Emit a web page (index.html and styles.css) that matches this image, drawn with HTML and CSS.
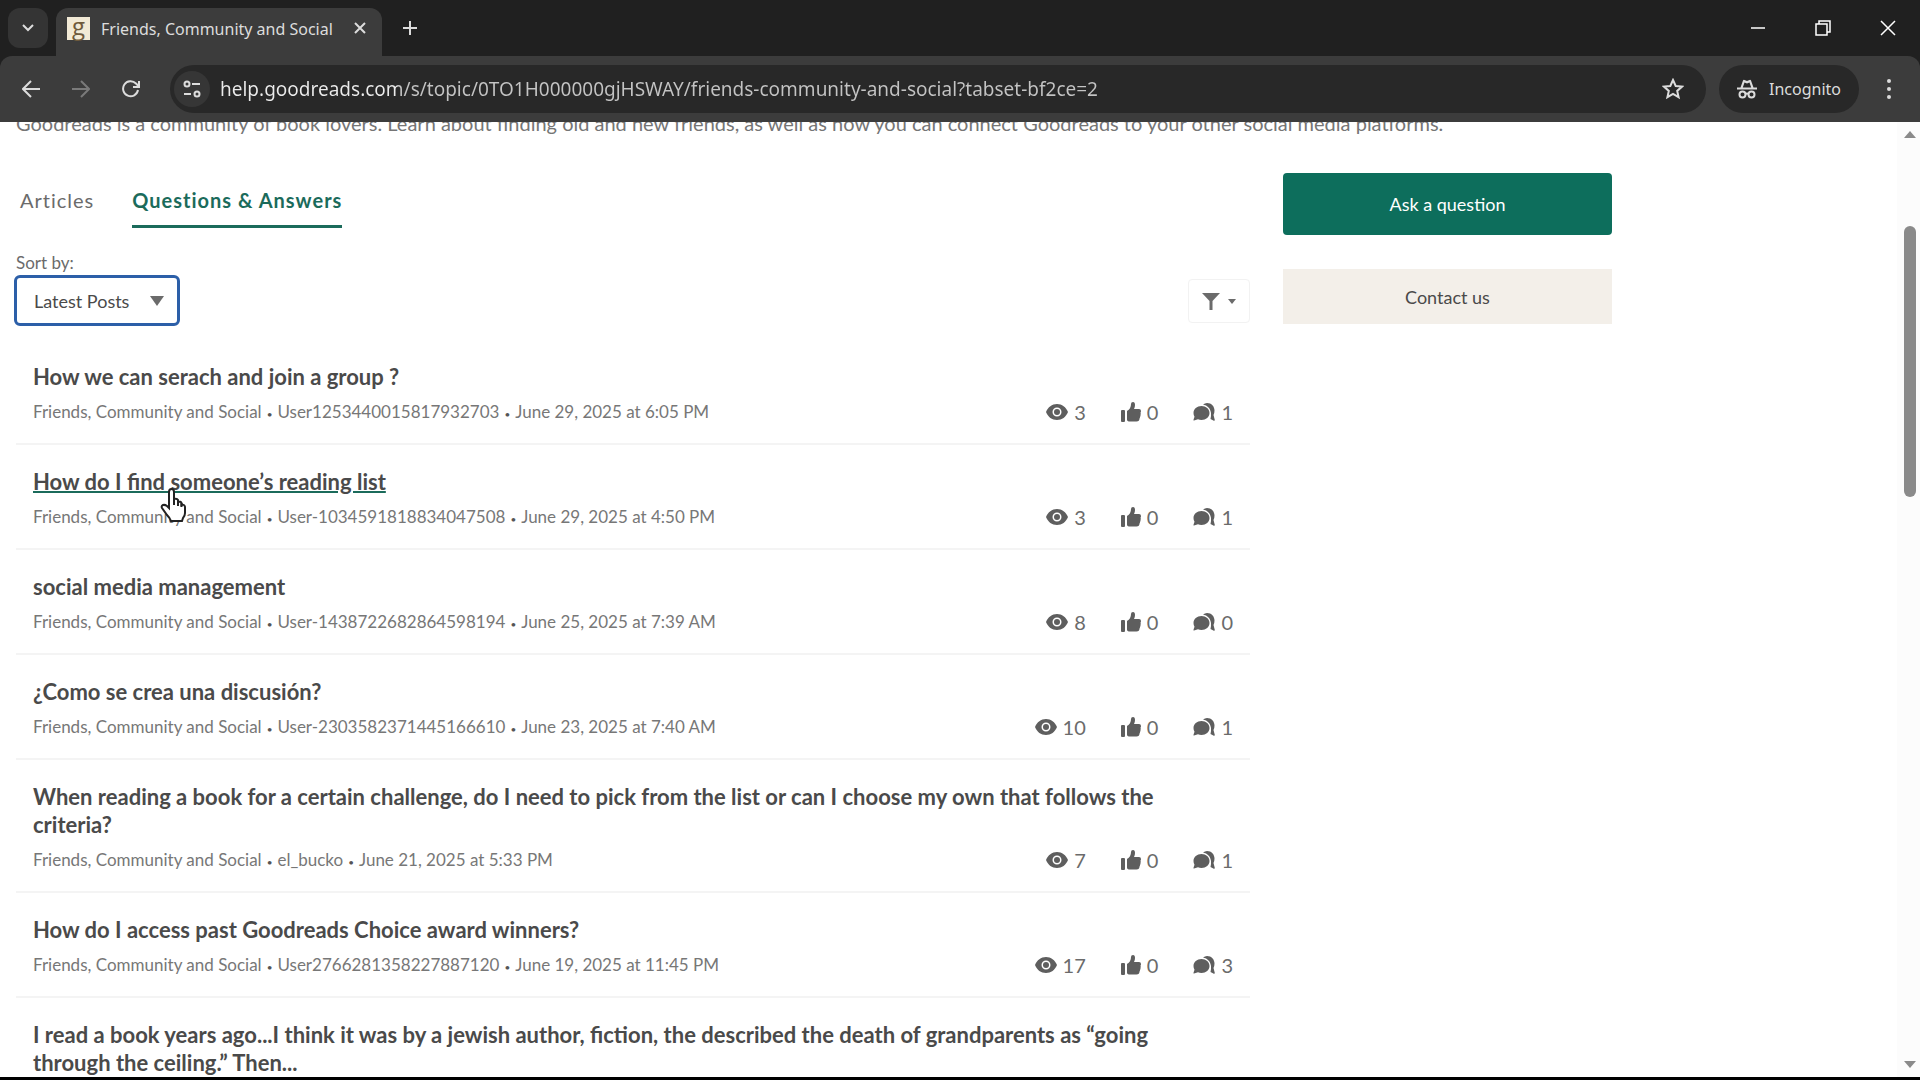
FILE: index.html
```html
<!DOCTYPE html>
<html lang="en">
<head>
<meta charset="utf-8">
<title>Friends, Community and Social</title>
<link rel="stylesheet" href="styles.css">
</head>
<body>
<svg class="sprite" aria-hidden="true">
  <symbol id="eye" viewBox="0 0 22 16"><path fill-rule="evenodd" d="M11 0C6 0 2 3 0 8c2 5 6 8 11 8s9-3 11-8C20 3 16 0 11 0Zm0 3.500a4.500 4.500 0 1 1 0 9 4.500 4.500 0 0 1 0-9Z"/><circle cx="11" cy="8" r="3"/></symbol>
  <symbol id="like" viewBox="0 0 20 20"><path d="M0 9q0-1 1-1h2q1 0 1 1v10q0 1-1 1H1q-1 0-1-1ZM6 9q4-2 4-7 0-2 2-2 2 0 2 3 0 2-1 4h5q2 0 2 2 0 1-.5 1.500.5 1 0 2.500.2 1-.5 2 0 1-.5 1.500 0 3-3 3H9q-3 0-3-2Z"/></symbol>
  <symbol id="talk" viewBox="0 0 22 18"><path d="M8.500 3c4.500 0 8 3 8 7s-3.500 7-8 7q-2 0-3.500-.7L1 17.500q-.8.2-.5-.7l1-3Q.5 12 .5 10c0-4 3.500-7 8-7Z"/><path d="M10 1.500Q12 0 14 0c4.500 0 7.500 3.500 7.500 7.500q0 2.500-1 4.500l1.300 5q0 1-1 .7L17.500 16q.8-3 .5-6C17.500 5.500 14.500 2.500 10 1.500Z"/></symbol>
</svg>

<header class="browser">
  <div class="tabstrip">
    <button class="tab-search" aria-label="Search tabs"><svg width="14" height="10" viewBox="0 0 14 10"><path d="m2 2 5 5 5-5"/></svg></button>
    <div class="tab">
      <span class="favicon">g</span>
      <span class="tab-title">Friends, Community and Social</span>
      <button class="plain" aria-label="Close tab"><svg width="12" height="12" viewBox="0 0 12 12"><path d="m1 1 10 10M11 1 1 11"/></svg></button>
    </div>
    <button class="plain new-tab" aria-label="New tab"><svg width="16" height="16" viewBox="0 0 16 16"><path d="M8 1v14M1 8h14"/></svg></button>
    <div class="window-controls">
      <button class="plain" aria-label="Minimize"><svg width="16" height="16" viewBox="0 0 16 16"><path d="M1 8h14"/></svg></button>
      <button class="plain" aria-label="Restore"><svg width="16" height="16" viewBox="0 0 16 16"><path d="M1 4h11v11H1ZM4 4V1h11v11h-3"/></svg></button>
      <button class="plain" aria-label="Close"><svg width="16" height="16" viewBox="0 0 16 16"><path d="m1 1 14 14M15 1 1 15"/></svg></button>
    </div>
  </div>
  <div class="toolbar">
    <nav class="history">
      <button class="plain" aria-label="Back"><svg width="18" height="18" viewBox="0 0 18 18"><path d="M18 9H2M9 1 1 9l8 8"/></svg></button>
      <button class="plain dim" aria-label="Forward"><svg width="18" height="18" viewBox="0 0 18 18"><path d="M0 9h16M9 1l8 8-8 8"/></svg></button>
      <button class="plain" aria-label="Reload"><svg width="18" height="18" viewBox="0 0 18 18"><path d="M16 10a7.500 7.500 0 1 1-2-6.500L16.500 6"/><path d="M17 1v6h-6"/></svg></button>
    </nav>
    <div class="omnibox">
      <button class="site-info" aria-label="Site information"><svg width="18" height="18" viewBox="0 0 18 18"><circle cx="4" cy="4" r="2.500"/><path d="M9 4h8M1 14h7"/><circle cx="14" cy="14" r="2.500"/></svg></button>
      <input class="url" type="text" aria-label="Address" value="help.goodreads.com/s/topic/0TO1H000000gjHSWAY/friends-community-and-social?tabset-bf2ce=2">
      <button class="plain" aria-label="Bookmark"><svg width="22" height="22" viewBox="0 0 22 22"><path d="m11 2 2.700 6 6.300.6-4.800 4.300 1.400 6.300L11 16l-5.600 3.200 1.400-6.300L2 8.600 8.300 8Z"/></svg></button>
    </div>
    <button class="incognito"><svg width="20" height="20" viewBox="0 0 20 20"><path class="solid" fill-rule="evenodd" d="M0 8.500h3.500L6 1.500Q6.500.5 7.500 1L10 2l2.500-1q1-.5 1.500.5l2.500 7H20v2H0ZM7.500 3.500l-1.700 5h8.400l-1.700-5L10 4.500Z"/><circle cx="5.500" cy="15.500" r="3"/><circle cx="14.500" cy="15.500" r="3"/><path d="M8.500 15q1.500-1 3 0"/></svg>Incognito</button>
    <button class="plain" aria-label="Menu"><svg width="6" height="22" viewBox="0 0 6 22"><g class="solid"><circle cx="3" cy="3" r="2"/><circle cx="3" cy="11" r="2"/><circle cx="3" cy="19" r="2"/></g></svg></button>
  </div>
</header>

<div class="viewport">
  <div class="page">
    <p class="intro">Goodreads is a community of book lovers. Learn about finding old and new friends, as well as how you can connect Goodreads to your other social media platforms.</p>
    <div class="columns">
      <main class="feed">
        <nav class="tabs">
          <a href="#articles">Articles</a>
          <a href="#questions" class="current">Questions &amp; Answers</a>
        </nav>
        <div class="controls">
          <div class="sort">
            <label for="sort">Sort by:</label>
            <div class="select-box">
              <select id="sort"><option>Latest Posts</option></select>
              <svg width="14" height="10" viewBox="0 0 14 10"><path d="M0 0h14L7 10Z"/></svg>
            </div>
          </div>
          <button class="filter" aria-label="Filter"><svg width="18" height="18" viewBox="0 0 18 18"><path d="M0 1h18l-7.500 8v9h-3V9Z"/></svg><svg width="8" height="5" viewBox="0 0 8 5"><path d="M0 0h8L4 5Z"/></svg></button>
        </div>
        <ul class="posts">
          <li class="post">
            <h2><a href="#q1">How we can serach and join a group ?</a></h2>
            <div class="details">
              <p class="meta"><a href="#t">Friends, Community and Social</a><span>•</span><a href="#u1">User1253440015817932703</a><span>•</span>June 29, 2025 at 6:05 PM</p>
              <div class="stats"><span><svg class="eye"><use href="#eye"/></svg>3</span><span><svg class="like"><use href="#like"/></svg>0</span><span><svg class="talk"><use href="#talk"/></svg>1</span></div>
            </div>
          </li>
          <li class="post">
            <h2><a href="#q2" class="hovered">How do I find someone’s reading list<svg class="pointer" viewBox="0 0 26 34"><path d="M9 20V4q0-3 2.500-3T14 4v10-3q3-1 4 1v2q3-1 3.500 1v2q3-1 3.500 2v6q0 3-2 5l-1 3H11q-1-3-4-6l-5-7q-1-2 1-3 2-.5 4 1l2 2Z"/><path d="M14 11v6M18 12v6M21.500 15v4"/></svg></a></h2>
            <div class="details">
              <p class="meta"><a href="#t">Friends, Community and Social</a><span>•</span><a href="#u2">User-1034591818834047508</a><span>•</span>June 29, 2025 at 4:50 PM</p>
              <div class="stats"><span><svg class="eye"><use href="#eye"/></svg>3</span><span><svg class="like"><use href="#like"/></svg>0</span><span><svg class="talk"><use href="#talk"/></svg>1</span></div>
            </div>
          </li>
          <li class="post">
            <h2><a href="#q3">social media management</a></h2>
            <div class="details">
              <p class="meta"><a href="#t">Friends, Community and Social</a><span>•</span><a href="#u3">User-1438722682864598194</a><span>•</span>June 25, 2025 at 7:39 AM</p>
              <div class="stats"><span><svg class="eye"><use href="#eye"/></svg>8</span><span><svg class="like"><use href="#like"/></svg>0</span><span><svg class="talk"><use href="#talk"/></svg>0</span></div>
            </div>
          </li>
          <li class="post">
            <h2><a href="#q4">¿Como se crea una discusión?</a></h2>
            <div class="details">
              <p class="meta"><a href="#t">Friends, Community and Social</a><span>•</span><a href="#u4">User-2303582371445166610</a><span>•</span>June 23, 2025 at 7:40 AM</p>
              <div class="stats"><span><svg class="eye"><use href="#eye"/></svg>10</span><span><svg class="like"><use href="#like"/></svg>0</span><span><svg class="talk"><use href="#talk"/></svg>1</span></div>
            </div>
          </li>
          <li class="post">
            <h2><a href="#q5">When reading a book for a certain challenge, do I need to pick from the list or can I choose my own that follows the criteria?</a></h2>
            <div class="details">
              <p class="meta"><a href="#t">Friends, Community and Social</a><span>•</span><a href="#u5">el_bucko</a><span>•</span>June 21, 2025 at 5:33 PM</p>
              <div class="stats"><span><svg class="eye"><use href="#eye"/></svg>7</span><span><svg class="like"><use href="#like"/></svg>0</span><span><svg class="talk"><use href="#talk"/></svg>1</span></div>
            </div>
          </li>
          <li class="post">
            <h2><a href="#q6">How do I access past Goodreads Choice award winners?</a></h2>
            <div class="details">
              <p class="meta"><a href="#t">Friends, Community and Social</a><span>•</span><a href="#u6">User2766281358227887120</a><span>•</span>June 19, 2025 at 11:45 PM</p>
              <div class="stats"><span><svg class="eye"><use href="#eye"/></svg>17</span><span><svg class="like"><use href="#like"/></svg>0</span><span><svg class="talk"><use href="#talk"/></svg>3</span></div>
            </div>
          </li>
          <li class="post">
            <h2><a href="#q7">I read a book years ago...I think it was by a jewish author, fiction, the described the death of grandparents as “going through the ceiling.” Then...</a></h2>
          </li>
        </ul>
      </main>
      <aside class="side">
        <button class="ask">Ask a question</button>
        <button class="contact">Contact us</button>
      </aside>
    </div>
  </div>
  <div class="scrollbar" aria-hidden="true">
    <svg width="12" height="7" viewBox="0 0 12 7"><path d="M0 7h12L6 0Z"/></svg>
    <div class="track"><div class="thumb"></div></div>
    <svg width="12" height="7" viewBox="0 0 12 7"><path d="M0 0h12L6 7Z"/></svg>
  </div>
</div>
</body>
</html>
```
FILE: styles.css
```css
* { box-sizing: border-box; }

body {
  margin: 0;
  height: 100vh;
  display: flex;
  flex-direction: column;
  overflow: hidden;
  background: #fff;
  border-bottom: 3px solid #000;
  font-family: Lato, sans-serif;
  color: #6b6b6b;
}

button, select, input { font: inherit; color: inherit; border: 0; background: none; padding: 0; }
a { color: inherit; text-decoration: none; }
h2, p, ul { margin: 0; padding: 0; }
svg { display: block; flex: none; }
.sprite { position: absolute; width: 0; height: 0; }

/* Browser chrome */
.browser {
  font-family: "Noto Sans", sans-serif;
  color: #dcdcdc;
  background: #202020;
  flex: none;
}
.browser svg { fill: none; stroke: currentColor; stroke-width: 2; }
.browser svg .solid { fill: currentColor; stroke: none; }
.plain { display: flex; align-items: center; justify-content: center; }
.dim { color: #7a7a7a; }

.tabstrip { display: flex; align-items: flex-start; height: 56px; padding: 8px 24px 0 8px; }
.tab-search {
  width: 40px;
  height: 40px;
  border-radius: 12px;
  background: #343434;
  display: flex;
  align-items: center;
  justify-content: center;
}
.tab {
  display: flex;
  align-items: center;
  width: 326px;
  height: 48px;
  margin-left: 8px;
  padding: 0 16px 8px 11px;
  border-radius: 12px 12px 0 0;
  background: #3c3c3c;
}
.favicon {
  width: 23px;
  height: 23px;
  background: #f2ead6;
  color: #6e5a3c;
  font: 24px/17px "Open Sans", sans-serif;
  text-align: center;
}
.tab-title { flex: 1; margin-left: 11px; padding-top: 1px; font-size: 16px; line-height: 24px; white-space: nowrap; }
.new-tab { margin: 12px 0 0 20px; }
.window-controls { display: flex; gap: 49px; margin: 12px 0 0 auto; color: #fff; }
.browser .window-controls svg { stroke-width: 1.500; }

.toolbar {
  display: flex;
  align-items: center;
  height: 66px;
  padding: 0 28px 0 22px;
  background: #3c3c3c;
  border-radius: 12px 12px 0 0;
}
.history { display: flex; gap: 32px; margin-right: 30px; }
.omnibox {
  flex: 1;
  display: flex;
  align-items: center;
  height: 48px;
  padding: 0 22px 0 4px;
  border-radius: 24px;
  background: #282828;
}
.site-info {
  width: 36px;
  height: 36px;
  border-radius: 50%;
  background: #363636;
  display: flex;
  align-items: center;
  justify-content: center;
}
/* The host is brighter than the path that follows it. */
.url {
  flex: 1;
  height: 32px;
  margin: 0 10px;
  outline: 0;
  font-size: 19px;
  color: transparent;
  background: linear-gradient(90deg, #ececec 178px, #c4c4c4 178px);
  -webkit-background-clip: text;
  background-clip: text;
}
.incognito {
  display: flex;
  align-items: center;
  gap: 12px;
  height: 48px;
  margin: 0 27px 0 13px;
  padding: 0 18px;
  border-radius: 24px;
  background: #282828;
  font-size: 16px;
}

/* Help page */
.viewport { flex: 1; min-height: 0; display: flex; }
.page { flex: 1; overflow: hidden; padding: 0 16px; }
.intro { margin-top: -11px; font-size: 20px; line-height: 24px; color: #757575; white-space: nowrap; }
.columns { display: grid; grid-template-columns: minmax(0, 1234px) 329px; gap: 33px; margin-top: 38px; }

.tabs { display: flex; gap: 38px; padding: 13px 4px 0; font-size: 20px; line-height: 28px; letter-spacing: 1px; }
.tabs a { padding-bottom: 11px; border-bottom: 3px solid transparent; }
.tabs .current { font-weight: 700; color: #1b6b5b; border-color: #1b6b5b; }

.controls { display: flex; justify-content: space-between; align-items: flex-end; margin-top: 23px; }
.sort label { display: block; font-size: 17px; line-height: 24px; }
.select-box { display: grid; align-items: center; width: 166px; margin-left: -2px; }
.select-box select, .select-box svg { grid-area: 1 / 1; }
.select-box select {
  appearance: none;
  height: 51px;
  padding-left: 17px;
  border: 3px solid #2c5fa8;
  border-radius: 6px;
  background: #fff;
  font-size: 18px;
  color: #4a4a4a;
}
.select-box svg { justify-self: end; margin-right: 16px; fill: #6b6b6b; pointer-events: none; }
.filter {
  display: flex;
  align-items: center;
  justify-content: center;
  gap: 8px;
  width: 62px;
  height: 44px;
  margin-bottom: 3px;
  border: 1px solid #f2f2f2;
  border-radius: 4px;
  fill: #6b6b6b;
}

.posts { list-style: none; margin-top: 14px; }
.post { padding: 23px 17px 19px; border-bottom: 2px solid #f4f4f4; }
.post h2 { max-width: 1160px; font-size: 22px; line-height: 28px; font-weight: 700; color: #4a4a4a; }
.hovered { position: relative; text-decoration: underline; text-decoration-color: #1b6b5b; text-decoration-thickness: 2px; }
.pointer { position: absolute; left: 127px; top: 20px; width: 26px; height: 34px; fill: #fff; stroke: #222; stroke-width: 2; }
.details { display: flex; justify-content: space-between; align-items: center; margin-top: 9px; }
.meta { font-size: 17px; line-height: 24px; color: #777; }
.meta span { margin: 0 5px; font-size: 10px; line-height: 10px; color: #555; }
.stats { display: flex; gap: 35px; font-size: 20px; line-height: 24px; fill: #5e5e5e; }
.stats span { display: flex; align-items: center; gap: 6px; }
.eye { width: 22px; height: 16px; }
.like { width: 20px; height: 20px; }
.talk { width: 22px; height: 18px; }

.side { display: flex; flex-direction: column; gap: 34px; }
.ask { height: 62px; border-radius: 4px; background: #0d6e5c; color: #fff; font-size: 18px; }
.contact { height: 55px; background: #f3efe9; color: #4a4a4a; font-size: 18px; }

.scrollbar {
  display: flex;
  flex-direction: column;
  align-items: center;
  width: 23px;
  padding: 9px 4px 9px 7px;
  background: #fcfcfc;
  fill: #8a8a8a;
}
.track { flex: 1; padding-top: 88px; }
.thumb { width: 12px; height: 30vh; max-height: 271px; border-radius: 6px; background: #8a8a8a; }
```
